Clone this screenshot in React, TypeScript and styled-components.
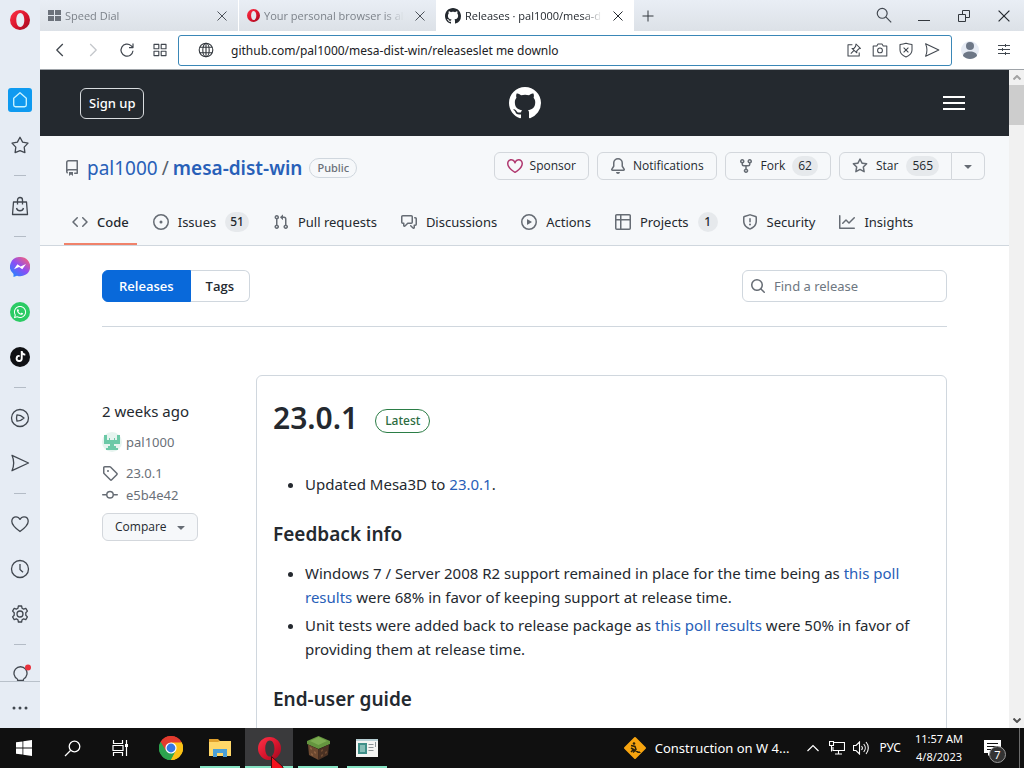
import React from 'react';
import styled, { createGlobalStyle, css } from 'styled-components';
import { FaWhatsapp, FaTiktok } from 'react-icons/fa';

const GlobalStyle = createGlobalStyle`
  * { box-sizing: border-box; }
  html, body { margin: 0; height: 100%; }
  body {
    overflow: hidden;
    font-family: "Noto Sans", "Open Sans", sans-serif;
    font-size: 13px;
    line-height: 20px;
    color: #24292f;
    background: #fff;
  }
  button, input { font: inherit; color: inherit; }
  button { margin: 0; padding: 0; border: 0; background: none; }
  a { color: #2860b8; text-decoration: none; }
  h1, h2, p, ul { margin: 0; padding: 0; }
  svg { display: block; flex: none; }
`;

/* ---------- icons ---------- */

const octicons = {
  repo: 'M2 2.5A2.5 2.5 0 0 1 4.5 0h8.75a.75.75 0 0 1 .75.75v12.5a.75.75 0 0 1-.75.75h-2.5a.75.75 0 0 1 0-1.5h1.75v-2h-8a1 1 0 0 0-.714 1.7.75.75 0 1 1-1.072 1.05A2.495 2.495 0 0 1 2 11.5Zm10.5-1h-8a1 1 0 0 0-1 1v6.708A2.486 2.486 0 0 1 4.5 9h8ZM5 12.25a.25.25 0 0 1 .25-.25h3.5a.25.25 0 0 1 .25.25v3.25a.25.25 0 0 1-.4.2l-1.45-1.087a.249.249 0 0 0-.3 0L5.4 15.7a.25.25 0 0 1-.4-.2Z',
  heart: 'm8 14.25.345.666a.75.75 0 0 1-.69 0l-.008-.004-.018-.01a7.152 7.152 0 0 1-.31-.17 22.055 22.055 0 0 1-3.434-2.414C2.045 10.731 0 8.35 0 5.5 0 2.836 2.086 1 4.25 1 5.797 1 7.153 1.802 8 3.02 8.847 1.802 10.203 1 11.75 1 13.914 1 16 2.836 16 5.5c0 2.85-2.045 5.231-3.885 6.818a22.066 22.066 0 0 1-3.744 2.584l-.018.01-.006.003h-.002ZM4.25 2.5c-1.336 0-2.75 1.164-2.75 3 0 2.15 1.58 4.144 3.365 5.682A20.58 20.58 0 0 0 8 13.393a20.58 20.58 0 0 0 3.135-2.211C12.92 9.644 14.5 7.65 14.5 5.5c0-1.836-1.414-3-2.75-3-1.373 0-2.609.986-3.029 2.456a.749.749 0 0 1-1.442 0C6.859 3.486 5.623 2.5 4.25 2.5Z',
  bell: 'M8 16a2 2 0 0 0 1.985-1.75c.017-.137-.097-.25-.235-.25h-3.5c-.138 0-.252.113-.235.25A2 2 0 0 0 8 16ZM3 5a5 5 0 0 1 10 0v2.947c0 .05.015.098.042.139l1.703 2.555A1.519 1.519 0 0 1 13.482 13H2.518a1.516 1.516 0 0 1-1.263-2.36l1.703-2.554A.255.255 0 0 0 3 7.947Zm5-3.5A3.5 3.5 0 0 0 4.5 5v2.947c0 .346-.102.683-.294.97l-1.703 2.556a.017.017 0 0 0-.003.01l.001.006c0 .002.002.004.004.006l.006.004.007.001h10.964l.007-.001.006-.004.004-.006.001-.007a.017.017 0 0 0-.003-.01l-1.703-2.554a1.745 1.745 0 0 1-.294-.97V5A3.5 3.5 0 0 0 8 1.5Z',
  fork: 'M5 5.372v.878c0 .414.336.75.75.75h4.5a.75.75 0 0 0 .75-.75v-.878a2.25 2.25 0 1 1 1.5 0v.878a2.25 2.25 0 0 1-2.25 2.25h-1.5v2.128a2.251 2.251 0 1 1-1.5 0V8.5h-1.5A2.25 2.25 0 0 1 3.5 6.25v-.878a2.25 2.25 0 1 1 1.5 0ZM5 3.25a.75.75 0 1 0-1.5 0 .75.75 0 0 0 1.5 0Zm6.75.75a.75.75 0 1 0 0-1.5.75.75 0 0 0 0 1.5Zm-3 8.75a.75.75 0 1 0-1.5 0 .75.75 0 0 0 1.5 0Z',
  star: 'M8 .25a.75.75 0 0 1 .673.418l1.882 3.815 4.21.612a.75.75 0 0 1 .416 1.279l-3.046 2.97.719 4.192a.751.751 0 0 1-1.088.791L8 12.347l-3.766 1.98a.75.75 0 0 1-1.088-.79l.72-4.194L.818 6.374a.75.75 0 0 1 .416-1.28l4.21-.611L7.327.668A.75.75 0 0 1 8 .25Zm0 2.445L6.615 5.5a.75.75 0 0 1-.564.41l-3.097.45 2.24 2.184a.75.75 0 0 1 .216.664l-.528 3.084 2.769-1.456a.75.75 0 0 1 .698 0l2.77 1.456-.53-3.084a.75.75 0 0 1 .216-.664l2.24-2.183-3.096-.45a.75.75 0 0 1-.564-.41L8 2.694Z',
  caret: 'm4.427 7.427 3.396 3.396a.25.25 0 0 0 .354 0l3.396-3.396A.25.25 0 0 0 11.396 7H4.604a.25.25 0 0 0-.177.427Z',
  code: 'm11.28 3.22 4.25 4.25a.75.75 0 0 1 0 1.06l-4.25 4.25a.749.749 0 0 1-1.275-.326.749.749 0 0 1 .215-.734L13.94 8l-3.72-3.72a.749.749 0 0 1 .326-1.275.749.749 0 0 1 .734.215Zm-6.56 0a.751.751 0 0 1 1.042.018.751.751 0 0 1 .018 1.042L2.06 8l3.72 3.72a.749.749 0 0 1-.326 1.275.749.749 0 0 1-.734-.215L.47 8.53a.75.75 0 0 1 0-1.06Z',
  issue: 'M8 9.5a1.5 1.5 0 1 0 0-3 1.5 1.5 0 0 0 0 3Z M8 0a8 8 0 1 1 0 16A8 8 0 0 1 8 0ZM1.5 8a6.5 6.5 0 1 0 13 0 6.5 6.5 0 0 0-13 0Z',
  pull: 'M1.5 3.25a2.25 2.25 0 1 1 3 2.122v5.256a2.251 2.251 0 1 1-1.5 0V5.372A2.25 2.25 0 0 1 1.5 3.25Zm5.677-.177L9.573.677A.25.25 0 0 1 10 .854V2.5h1A2.5 2.5 0 0 1 13.5 5v5.628a2.251 2.251 0 1 1-1.5 0V5a1 1 0 0 0-1-1h-1v1.646a.25.25 0 0 1-.427.177L7.177 3.427a.25.25 0 0 1 0-.354ZM3.75 2.5a.75.75 0 1 0 0 1.5.75.75 0 0 0 0-1.5Zm0 9.5a.75.75 0 1 0 0 1.5.75.75 0 0 0 0-1.5Zm8.25.75a.75.75 0 1 0 1.5 0 .75.75 0 0 0-1.5 0Z',
  discussion: 'M1.75 1h8.5c.966 0 1.75.784 1.75 1.75v5.5A1.75 1.75 0 0 1 10.25 10H7.061l-2.574 2.573A1.458 1.458 0 0 1 2 11.543V10h-.25A1.75 1.75 0 0 1 0 8.25v-5.5C0 1.784.784 1 1.75 1ZM1.5 2.75v5.5c0 .138.112.25.25.25h1a.75.75 0 0 1 .75.75v2.19l2.72-2.72a.749.749 0 0 1 .53-.22h3.5a.25.25 0 0 0 .25-.25v-5.5a.25.25 0 0 0-.25-.25h-8.5a.25.25 0 0 0-.25.25Zm13 2a.25.25 0 0 0-.25-.25h-.5a.75.75 0 0 1 0-1.5h.5c.966 0 1.75.784 1.75 1.75v5.5A1.75 1.75 0 0 1 14.25 12H14v1.543a1.458 1.458 0 0 1-2.487 1.03L9.22 12.28a.749.749 0 0 1 .326-1.275.749.749 0 0 1 .734.215l2.22 2.22v-2.19a.75.75 0 0 1 .75-.75h1a.25.25 0 0 0 .25-.25Z',
  play: 'M8 0a8 8 0 1 1 0 16A8 8 0 0 1 8 0ZM1.5 8a6.5 6.5 0 1 0 13 0 6.5 6.5 0 0 0-13 0Zm4.879-2.773 4.264 2.559a.25.25 0 0 1 0 .428l-4.264 2.559A.25.25 0 0 1 6 10.559V5.442a.25.25 0 0 1 .379-.215Z',
  table: 'M0 1.75C0 .784.784 0 1.75 0h12.5C15.216 0 16 .784 16 1.75v12.5A1.75 1.75 0 0 1 14.25 16H1.75A1.75 1.75 0 0 1 0 14.25ZM6.5 6.5v8h7.75a.25.25 0 0 0 .25-.25V6.5Zm8-1.5V1.75a.25.25 0 0 0-.25-.25H6.5V5Zm-13 1.5v7.75c0 .138.112.25.25.25H5v-8ZM5 5V1.5H1.75a.25.25 0 0 0-.25.25V5Z',
  shield: 'M7.467.133a1.748 1.748 0 0 1 1.066 0l5.25 1.68A1.75 1.75 0 0 1 15 3.48V7c0 1.566-.32 3.182-1.303 4.682-.983 1.498-2.585 2.813-5.032 3.855a1.697 1.697 0 0 1-1.33 0c-2.447-1.042-4.049-2.357-5.032-3.855C1.32 10.182 1 8.566 1 7V3.48a1.755 1.755 0 0 1 1.217-1.667Zm.61 1.429a.25.25 0 0 0-.153 0l-5.25 1.68a.25.25 0 0 0-.174.238V7c0 1.358.275 2.666 1.057 3.86.784 1.194 2.121 2.34 4.366 3.297a.196.196 0 0 0 .154 0c2.245-.956 3.582-2.104 4.366-3.298C13.225 9.666 13.5 8.36 13.5 7V3.48a.251.251 0 0 0-.174-.237l-5.25-1.68ZM8.75 4.75v3a.75.75 0 0 1-1.5 0v-3a.75.75 0 0 1 1.5 0ZM9 10.5a1 1 0 1 1-2 0 1 1 0 0 1 2 0Z',
  graph: 'M1.5 1.75V13.5h13.75a.75.75 0 0 1 0 1.5H.75a.75.75 0 0 1-.75-.75V1.75a.75.75 0 0 1 1.5 0Zm14.28 2.53-5.25 5.25a.75.75 0 0 1-1.06 0L7 7.06 4.28 9.78a.751.751 0 0 1-1.042-.018.751.751 0 0 1-.018-1.042l3.25-3.25a.75.75 0 0 1 1.06 0L10 7.94l4.72-4.72a.751.751 0 0 1 1.042.018.751.751 0 0 1 .018 1.042Z',
  search: 'M10.68 11.74a6 6 0 0 1-7.922-8.982 6 6 0 0 1 8.982 7.922l3.04 3.04a.749.749 0 0 1-.326 1.275.749.749 0 0 1-.734-.215ZM11.5 7a4.499 4.499 0 1 0-8.997 0A4.499 4.499 0 0 0 11.5 7Z',
  tag: 'M1 7.775V2.75C1 1.784 1.784 1 2.75 1h5.025c.464 0 .91.184 1.238.513l6.25 6.25a1.75 1.75 0 0 1 0 2.474l-5.026 5.026a1.75 1.75 0 0 1-2.474 0l-6.25-6.25A1.752 1.752 0 0 1 1 7.775Zm1.5 0c0 .066.026.13.073.177l6.25 6.25a.25.25 0 0 0 .354 0l5.025-5.025a.25.25 0 0 0 0-.354l-6.25-6.25a.25.25 0 0 0-.177-.073H2.75a.25.25 0 0 0-.25.25ZM6 5a1 1 0 1 1 0 2 1 1 0 0 1 0-2Z',
  commit: 'M11.93 8.5a4.002 4.002 0 0 1-7.86 0H.75a.75.75 0 0 1 0-1.5h3.32a4.002 4.002 0 0 1 7.86 0h3.32a.75.75 0 0 1 0 1.5Zm-1.43-.75a2.5 2.5 0 1 0-5 0 2.5 2.5 0 0 0 5 0Z',
  github: 'M8 0C3.58 0 0 3.58 0 8c0 3.54 2.29 6.53 5.47 7.59.4.07.55-.17.55-.38 0-.19-.01-.82-.01-1.49-2.01.37-2.53-.49-2.69-.94-.09-.23-.48-.94-.82-1.13-.28-.15-.68-.52-.01-.53.63-.01 1.08.58 1.23.82.72 1.21 1.87.87 2.33.66.07-.52.28-.87.51-1.07-1.78-.2-3.64-.89-3.64-3.95 0-.87.31-1.59.82-2.15-.08-.2-.36-1.02.08-2.12 0 0 .67-.21 2.2.82.64-.18 1.32-.27 2-.27.68 0 1.36.09 2 .27 1.53-1.04 2.2-.82 2.2-.82.44 1.1.16 1.92.08 2.12.51.56.82 1.27.82 2.15 0 3.07-1.87 3.75-3.65 3.95.29.25.54.73.54 1.48 0 1.07-.01 1.93-.01 2.2 0 .21.15.46.55.38A8.013 8.013 0 0016 8c0-4.42-3.58-8-8-8z',
};

type OctName = keyof typeof octicons;

const Oct = ({ name, size = 16, color = '#666c74' }: { name: OctName; size?: number; color?: string }) => (
  <svg width={size} height={size} viewBox="0 0 16 16" fill={color} aria-hidden="true">
    <path d={octicons[name]} />
  </svg>
);

const LineIcon = ({
  size = 20,
  color = '#41474f',
  weight = 1.3,
  children,
}: {
  size?: number;
  color?: string;
  weight?: number;
  children: React.ReactNode;
}) => (
  <svg
    width={size}
    height={size}
    viewBox="0 0 20 20"
    fill="none"
    stroke={color}
    strokeWidth={weight}
    strokeLinejoin="round"
    overflow="visible"
    aria-hidden="true"
  >
    {children}
  </svg>
);

const OperaLogo = ({ size, id }: { size: number; id: string }) => (
  <svg width={size} height={size} viewBox="0 0 20 20" aria-hidden="true">
    <defs>
      <linearGradient id={id} x1="0" y1="0" x2="1" y2="1">
        <stop offset="0" stopColor="#ff3348" />
        <stop offset="0.55" stopColor="#d8142c" />
        <stop offset="1" stopColor="#9c0a20" />
      </linearGradient>
    </defs>
    <path
      fill={`url(#${id})`}
      fillRule="evenodd"
      d="M10 0a10 10 0 1 0 0 20a10 10 0 0 0 0-20ZM10.300 3c2.400 0 4 3 4 7s-1.600 7-4 7s-4-3-4-7s1.600-7 4-7Z"
    />
  </svg>
);

const CloseIcon = ({ size = 10, color = '#4c525a' }: { size?: number; color?: string }) => (
  <svg width={size} height={size} viewBox="0 0 10 10" stroke={color} strokeWidth="1" aria-hidden="true">
    <path d="M0.500 0.500l9 9M9.500 0.500l-9 9" />
  </svg>
);

const GlobeIcon = () => (
  <LineIcon size={16} color="#33383e" weight={1.4}>
    <circle cx="10" cy="10" r="8.500" />
    <ellipse cx="10" cy="10" rx="4" ry="8.500" />
    <path d="M2.500 6.500h15M2.500 13.500h15M10 1.500v17" />
  </LineIcon>
);

const ShieldXIcon = () => (
  <LineIcon size={16} weight={1.3}>
    <path d="M10 1.500c2.500 1 5 1.400 7.500 1.500v7c0 4-3 7-7.500 8.700C5.500 17 2.500 14 2.500 10V3C5 2.900 7.500 2.500 10 1.500ZM7 7l6 6M13 7l-6 6" />
  </LineIcon>
);

const GearIcon = () => (
  <LineIcon>
    <circle cx="10" cy="10" r="3" />
    <path d="M8.400 2h3.200l.5 2.300 1.500.8 2.200-.8 1.600 2.800-1.600 1.600v2.600l1.600 1.600-1.600 2.800-2.200-.8-1.500.8-.5 2.300H8.400l-.5-2.300-1.500-.8-2.200.8-1.600-2.800 1.600-1.600V8.700L2.600 7.100l1.600-2.800 2.200.8 1.500-.8Z" />
  </LineIcon>
);

const MessengerLogo = () => (
  <svg width="20" height="20" viewBox="0 0 20 20" aria-hidden="true">
    <defs>
      <linearGradient id="msgr" x1="0.100" y1="1" x2="0.900" y2="0">
        <stop offset="0" stopColor="#1a8cff" />
        <stop offset="0.500" stopColor="#8b4df5" />
        <stop offset="1" stopColor="#ff6370" />
      </linearGradient>
    </defs>
    <path fill="url(#msgr)" d="M10 0a10 9.600 0 1 1-3 18.700L3.500 20v-3A9.600 9.600 0 0 1 10 0Z" />
    <path fill="#fff" d="M4 12.300l3.400-5 3.200 2.300L16 6.900l-3.700 5.300-3.200-2.300Z" />
  </svg>
);

const SendIcon = ({ size = 20 }: { size?: number }) => (
  <LineIcon size={size}>
    <path d="M2 2.300l16.500 7.700L2 17.700C4.500 12 4.500 8 2 2.300Z" />
  </LineIcon>
);

/* ---------- shell ---------- */

const Desktop = styled.div`
  display: flex;
  flex-direction: column;
  height: 100vh;
  overflow: hidden;
`;

const Browser = styled.div`
  flex: 1;
  min-height: 0;
  display: flex;
`;

const Sidebar = styled.aside`
  width: 40px;
  flex: none;
  display: flex;
  flex-direction: column;
  background: #e6ecf4;
`;

const SideScroll = styled.div`
  flex: 1;
  min-height: 0;
  overflow: hidden;
`;

const SideLogo = styled.button`
  display: flex;
  justify-content: center;
  width: 100%;
  height: 77px;
  padding-top: 10px;
`;

const SideButton = styled.button`
  display: flex;
  align-items: center;
  justify-content: center;
  width: 100%;
  height: 45px;
`;

const SideTile = styled.span<{ $bg: string; $round?: boolean; $size: number }>`
  display: flex;
  align-items: center;
  justify-content: center;
  width: ${(p) => p.$size}px;
  height: ${(p) => p.$size}px;
  border-radius: ${(p) => (p.$round ? '50%' : '3px')};
  background: ${(p) => p.$bg};
`;

const SideRule = styled.hr`
  width: 12px;
  height: 1px;
  margin: 8px auto 7px;
  border: 0;
  background: #b4bcc6;
`;

const SideMore = styled.button`
  display: flex;
  align-items: center;
  justify-content: center;
  height: 47px;
  padding-top: 6px;
  border-top: 1px solid #b9c1ca;
`;

const Window = styled.div`
  flex: 1;
  min-width: 0;
  display: flex;
  flex-direction: column;
`;

const TabStrip = styled.div`
  display: flex;
  height: 31px;
  flex: none;
  background: linear-gradient(#e9eef5, #dce1e7);
`;

const Tab = styled.div<{ $active?: boolean }>`
  display: flex;
  align-items: center;
  gap: 4px;
  flex: 0 1 198px;
  min-width: 0;
  padding: 0 11px 0 8px;
  font-size: 12px;
  color: ${(p) => (p.$active ? '#24292f' : '#7c828a')};
  background: ${(p) => (p.$active ? '#fff' : 'transparent')};
  & + & { border-left: 1px solid ${(p) => (p.$active ? '#fff' : '#c3c8cf')}; }
`;

const TabTitle = styled.span`
  flex: 1;
  min-width: 0;
  overflow: hidden;
  white-space: nowrap;
  margin-right: 7px;
  font-family: "Open Sans", sans-serif;
  font-size: 11px;
  mask-image: linear-gradient(90deg, #000 calc(100% - 20px), transparent);
`;

const StripButton = styled.button<{ $width: number }>`
  width: ${(p) => p.$width}px;
  height: 31px;
  display: flex;
  align-items: center;
  justify-content: center;
`;

const StripSpacer = styled.div`
  flex: 1;
`;

const Toolbar = styled.div`
  display: flex;
  align-items: center;
  flex: none;
  height: 39px;
  padding: 0 4px 0 3px;
  background: #fff;
  border-bottom: 1px solid #9ea3a8;
`;

const ToolButton = styled.button<{ $width: number }>`
  width: ${(p) => p.$width}px;
  height: 32px;
  flex: none;
  display: flex;
  align-items: center;
  justify-content: center;
`;

const AddressBox = styled.div`
  flex: 1;
  min-width: 0;
  height: 31px;
  margin: 0 1px 0 2px;
  padding: 0 6px 0 19px;
  display: flex;
  align-items: center;
  border: 1px solid #3a87b7;
  border-radius: 3px;
  background: #fff;
`;

const AddressInput = styled.input`
  flex: 1;
  min-width: 0;
  height: 28px;
  margin-left: 17px;
  padding: 0;
  border: 0;
  outline: 0;
  background: transparent;
  font-size: 12px;
  color: #202124;
`;

const Viewport = styled.div`
  flex: 1;
  min-height: 0;
  display: flex;
`;

const Page = styled.div`
  flex: 1;
  min-width: 0;
  overflow: hidden;
  background: #fff;
`;

const Scrollbar = styled.div`
  width: 15px;
  flex: none;
  display: flex;
  flex-direction: column;
  align-items: center;
  padding: 5px 0;
  background: #f1f1f1;
`;

const Thumb = styled.div`
  width: 15px;
  height: 40px;
  margin: 5px 0 auto;
  background: #cdcdcd;
`;

/* ---------- web page ---------- */

const SiteHeader = styled.header`
  display: grid;
  grid-template-columns: 1fr auto 1fr;
  align-items: center;
  height: 66px;
  padding: 0 40px;
  background: #24292f;
`;

const SignUp = styled.button`
  justify-self: start;
  height: 31px;
  padding: 0 8px;
  border: 1px solid #d9dcdf;
  border-radius: 6px;
  color: #fff;
  font-size: 13px;
  font-weight: 500;
`;

const MenuButton = styled.button`
  justify-self: end;
  padding: 4px;
`;

const RepoHead = styled.section`
  background: #f6f8fa;
  border-bottom: 1px solid #d0d7de;
  padding: 16px 24px 0;
`;

const TitleRow = styled.div`
  display: flex;
  align-items: flex-start;
  justify-content: space-between;
`;

const RepoTitle = styled.div`
  display: flex;
  align-items: center;
  gap: 7px;
  height: 32px;
`;

const RepoName = styled.h1`
  font-size: 19px;
  line-height: 28px;
  font-weight: 400;
  white-space: nowrap;
  strong { font-weight: 600; }
  span { margin: 0 4px; color: #57606a; }
`;

const Pill = styled.span<{ $green?: boolean }>`
  padding: 0 ${(p) => (p.$green ? 9 : 7)}px;
  margin-top: ${(p) => (p.$green ? 6 : 0)}px;
  border: 1px solid ${(p) => (p.$green ? '#2b7d46' : '#d0d7de')};
  border-radius: 24px;
  font-size: ${(p) => (p.$green ? 12 : 11)}px;
  line-height: ${(p) => (p.$green ? 22 : 18)}px;
  font-weight: 500;
  color: ${(p) => (p.$green ? '#2b6b40' : '#6a7078')};
`;

const Actions = styled.div`
  display: flex;
  gap: 8px;
`;

const smallButton = css`
  display: flex;
  align-items: center;
  height: 28px;
  border: 1px solid #d3d7dc;
  border-radius: 6px;
  background: #f6f8fa;
  font-family: "Open Sans", sans-serif;
  font-size: 12px;
  line-height: 18px;
  font-weight: 500;
  white-space: nowrap;
`;

const Counter = styled.span`
  min-width: 20px;
  padding: 0 5px;
  border-radius: 20px;
  background: #e6e9ec;
  text-align: center;
  font-size: 12px;
  line-height: 20px;
  font-weight: 500;
`;

const ActionButton = styled.button<{ $split?: 'left' | 'right' }>`
  ${smallButton}
  gap: ${(p) => (p.$split === 'left' ? 8 : 7)}px;
  padding: 0 12px;
  ${Counter} { padding: 0 6px; }
  ${(p) => p.$split === 'left' && 'border-radius: 6px 0 0 6px;'}
  ${(p) => p.$split === 'right' && 'border-radius: 0 6px 6px 0; border-left: 0; padding: 0 8px;'}
`;

const SplitButton = styled.div`
  display: flex;
`;

const RepoNav = styled.nav`
  display: flex;
  gap: 8px;
  margin-top: 14px;
`;

const NavItem = styled.a<{ $current?: boolean }>`
  display: flex;
  align-items: center;
  gap: 9px;
  height: 47px;
  padding: 3px 8px 0;
  white-space: nowrap;
  color: #24292f;
  border-bottom: 2px solid ${(p) => (p.$current ? '#f0826a' : 'transparent')};
  font-weight: ${(p) => (p.$current ? 500 : 400)};
`;

const Content = styled.main`
  padding: 24px 62px 0;
`;

const Subnav = styled.div`
  display: flex;
  justify-content: space-between;
  padding-bottom: 24px;
  border-bottom: 1px solid #d0d7de;
`;

const Segments = styled.div`
  display: flex;
  height: 32px;
  font-family: "Open Sans", sans-serif;
`;

const Segment = styled.a<{ $selected?: boolean }>`
  display: flex;
  align-items: center;
  padding: 0 ${(p) => (p.$selected ? 16 : 15)}px;
  font-weight: 600;
  border: 1px solid ${(p) => (p.$selected ? '#0969da' : '#d0d7de')};
  border-left-width: ${(p) => (p.$selected ? 1 : 0)}px;
  border-radius: ${(p) => (p.$selected ? '6px 0 0 6px' : '0 6px 6px 0')};
  background: ${(p) => (p.$selected ? '#0969da' : '#fff')};
  color: ${(p) => (p.$selected ? '#fff' : '#24292f')};
`;

const SearchBox = styled.label`
  display: flex;
  align-items: center;
  gap: 8px;
  width: 205px;
  height: 32px;
  padding: 0 7px;
  border: 1px solid #d0d7de;
  border-radius: 6px;
  input {
    flex: 1;
    min-width: 0;
    padding: 0;
    border: 0;
    outline: 0;
    background: transparent;
  }
  input::placeholder { color: #6e7781; opacity: 1; }
`;

const ReleaseRow = styled.section`
  display: grid;
  grid-template-columns: 138px 1fr;
  gap: 16px;
  margin-top: 48px;
`;

const Meta = styled.div`
  padding-top: 24px;
`;

const When = styled.p`
  font-size: 15px;
  line-height: 24px;
  margin-bottom: 8px;
`;

const MetaLine = styled.a<{ $gap: number }>`
  display: flex;
  align-items: center;
  gap: 8px;
  line-height: 22px;
  margin-bottom: ${(p) => p.$gap}px;
  color: #6a7078;
`;

const AuthorLine = styled(MetaLine)`
  gap: 4px;
`;

const Compare = styled.button`
  ${smallButton}
  gap: 6px;
  margin-top: 7px;
  padding: 0 8px 0 12px;
`;

const Card = styled.article`
  min-width: 0;
  height: 460px;
  padding: 22px 16px 0;
  border: 1px solid #d0d7de;
  border-radius: 6px;
`;

const CardHead = styled.div`
  display: flex;
  align-items: center;
  gap: 17px;
  height: 40px;
  margin-bottom: 34px;
`;

const Version = styled.h1`
  font-size: 30px;
  line-height: 40px;
  font-weight: 600;
`;

const Heading = styled.h2`
  font-size: 19px;
  line-height: 26px;
  font-weight: 600;
  margin: 25px 0 14px;
`;

const Notes = styled.ul`
  padding-left: 32px;
  font-size: 15px;
  line-height: 24px;
  li + li { margin-top: 4px; }
`;

/* ---------- taskbar ---------- */

const Taskbar = styled.footer`
  display: flex;
  flex: none;
  height: 40px;
  background: #101010;
  color: #fff;
`;

const TaskButton = styled.button<{ $open?: boolean; $active?: boolean; $first?: boolean }>`
  position: relative;
  display: flex;
  align-items: center;
  justify-content: center;
  width: 48px;
  height: 40px;
  margin-right: ${(p) => (p.$first ? 0 : 1)}px;
  background: ${(p) => (p.$active ? '#3a3a3c' : 'transparent')};
  ${(p) =>
    p.$open &&
    css`
      &::after {
        content: '';
        position: absolute;
        bottom: 0;
        left: ${p.$active ? 0 : 4}px;
        right: ${p.$active ? 0 : 4}px;
        height: 2px;
        background: #86e3c3;
      }
    `}
`;

const SystemGroup = styled.div`
  display: flex;
  margin-right: 3px;
`;

const Pointer = styled.svg`
  position: absolute;
  z-index: 1;
  left: 26px;
  top: 28px;
`;

const Tray = styled.div`
  display: flex;
  align-items: center;
  margin-left: auto;
`;

const NewsButton = styled.button`
  display: flex;
  align-items: center;
  gap: 8px;
  margin-right: 12px;
  white-space: nowrap;
`;

const TrayButton = styled.button`
  display: flex;
  align-items: center;
  justify-content: center;
  width: 24px;
  height: 40px;
`;

const Language = styled.button`
  margin: 0 14px 0 6px;
  font-size: 12px;
`;

const Clock = styled.div`
  font-size: 11px;
  line-height: 18px;
  text-align: center;
`;

const Notices = styled.button`
  position: relative;
  width: 54px;
  height: 40px;
  margin-left: 2px;
  display: flex;
  align-items: center;
  justify-content: center;
`;

const NoticeCount = styled.span`
  position: absolute;
  right: 13px;
  bottom: 5px;
  width: 17px;
  height: 17px;
  border: 1px solid #9a9a9a;
  border-radius: 50%;
  background: #333;
  font-size: 11px;
  line-height: 15px;
  text-align: center;
`;

const PeekEdge = styled.div`
  width: 5px;
  height: 40px;
  border-left: 1px solid #6c6c6c;
`;

/* ---------- sections ---------- */

const SideNav = () => (
  <Sidebar>
    <SideScroll>
      <SideLogo aria-label="Opera menu"><OperaLogo size={20} id="opera-side" /></SideLogo>
      <SideButton aria-label="Home">
        <SideTile $bg="#0f9af0" $size={24}>
          <LineIcon size={18} color="#c8f3ff" weight={1.5}>
            <path d="M10 2l7 6v7.500a2 2 0 0 1-2 2H5a2 2 0 0 1-2-2V8Z" />
          </LineIcon>
        </SideTile>
      </SideButton>
      <SideButton aria-label="Bookmarks">
        <LineIcon>
          <path d="M10 2.200l2.600 4.900 5.400 1-3.800 4 .7 5.500L10 15.600l-4.900 2 .7-5.500L2 8.100l5.400-1Z" />
        </LineIcon>
      </SideButton>
      <SideRule />
      <SideButton aria-label="Shopping">
        <LineIcon>
          <path d="M3.500 6h13l1 12.500h-15ZM7.500 8.500V4a2.500 2.500 0 0 1 5 0v4.500M6.500 12a3.600 3.600 0 0 0 7 0" />
        </LineIcon>
      </SideButton>
      <SideRule />
      <SideButton aria-label="Messenger"><MessengerLogo /></SideButton>
      <SideButton aria-label="WhatsApp">
        <SideTile $bg="#2bcb64" $round $size={20}><FaWhatsapp size={14} color="#fff" /></SideTile>
      </SideButton>
      <SideButton aria-label="TikTok">
        <SideTile $bg="#101114" $round $size={20}><FaTiktok size={11} color="#fff" /></SideTile>
      </SideButton>
      <SideRule />
      <SideButton aria-label="Player">
        <LineIcon>
          <circle cx="10" cy="10" r="8.500" />
          <path d="M7 6.800c2.500 0 5 1.200 7 3.200-2 2-4.500 3.200-7 3.200-.6-2-.6-4.400 0-6.400Z" />
        </LineIcon>
      </SideButton>
      <SideButton aria-label="My Flow"><SendIcon /></SideButton>
      <SideRule />
      <SideButton aria-label="Pinboards">
        <LineIcon>
          <path d="M10 17.500C5 14 1.800 11 1.800 7.300 1.800 4.500 3.700 2.800 6 2.800c1.800 0 3.200 1 4 2.600.8-1.600 2.200-2.600 4-2.600 2.300 0 4.200 1.700 4.200 4.500 0 3.700-3.200 6.700-8.200 10.200Z" />
        </LineIcon>
      </SideButton>
      <SideButton aria-label="History">
        <LineIcon>
          <circle cx="10" cy="10" r="8.500" />
          <path d="M10 5v5.500l3 2.800" />
        </LineIcon>
      </SideButton>
      <SideButton aria-label="Settings"><GearIcon /></SideButton>
      <SideRule />
      <SideButton aria-label="Tips">
        <LineIcon>
          <path d="M7.500 14a6.500 6.500 0 1 1 6 0M7.500 14v1.300h6V14M7.500 17h6" />
          <circle cx="18" cy="2.500" r="3" fill="#e8323c" stroke="none" />
        </LineIcon>
      </SideButton>
    </SideScroll>
    <SideMore aria-label="More">
      <svg width="16" height="4" viewBox="0 0 16 4" fill="#41474f" aria-hidden="true">
        <circle cx="2" cy="2" r="1.500" /><circle cx="8" cy="2" r="1.500" /><circle cx="14" cy="2" r="1.500" />
      </svg>
    </SideMore>
  </Sidebar>
);

const Tabs = () => (
  <TabStrip>
    <Tab>
      <svg width="13" height="12" viewBox="0 0 13 12" fill="#6c727b" aria-hidden="true">
        <path d="M0 0h6v5H0ZM7 0h6v5H7ZM0 6h6v5H0ZM7 6h6v5H7Z" />
      </svg>
      <TabTitle>Speed Dial</TabTitle>
      <button aria-label="Close tab"><CloseIcon /></button>
    </Tab>
    <Tab>
      <OperaLogo size={13} id="opera-tab" />
      <TabTitle>Your personal browser is al</TabTitle>
      <button aria-label="Close tab"><CloseIcon /></button>
    </Tab>
    <Tab $active>
      <Oct name="github" color="#24292f" />
      <TabTitle>Releases · pal1000/mesa-d</TabTitle>
      <button aria-label="Close tab"><CloseIcon color="#24292f" /></button>
    </Tab>
    <StripButton $width={28} aria-label="New tab">
      <svg width="12" height="12" viewBox="0 0 12 12" stroke="#33383e" aria-hidden="true"><path d="M6 0.500v11M0.500 6h11" /></svg>
    </StripButton>
    <StripSpacer />
    <StripButton $width={40} aria-label="Search tabs">
      <LineIcon size={18}><circle cx="8" cy="7" r="5.500" /><path d="M12 11l6 6" /></LineIcon>
    </StripButton>
    <StripButton $width={40} aria-label="Minimize">
      <svg width="12" height="12" viewBox="0 0 12 12" stroke="#33383e" aria-hidden="true"><path d="M0 10.500h12" /></svg>
    </StripButton>
    <StripButton $width={40} aria-label="Restore">
      <svg width="12" height="12" viewBox="0 0 12 12" fill="none" stroke="#33383e" aria-hidden="true">
        <path d="M0.500 4.500h7v7h-7ZM4.500 4.500v-4h7v7h-4" />
      </svg>
    </StripButton>
    <StripButton $width={40} aria-label="Close"><CloseIcon size={12} color="#24292f" /></StripButton>
  </TabStrip>
);

const AddressBar = () => (
  <Toolbar>
    <ToolButton $width={33} aria-label="Back">
      <LineIcon size={16} weight={1.6}><path d="M13.500 2.500L6 10l7.500 7.500" /></LineIcon>
    </ToolButton>
    <ToolButton $width={34} aria-label="Forward">
      <LineIcon size={16} weight={1.6} color="#c4c7cb"><path d="M6.500 2.500L14 10l-7.500 7.500" /></LineIcon>
    </ToolButton>
    <ToolButton $width={33} aria-label="Reload">
      <LineIcon size={16} weight={1.5}><path d="M17.500 11a7.500 7.500 0 1 1-2.500-6.500l2 2M17.500 2v5h-5" /></LineIcon>
    </ToolButton>
    <ToolButton $width={33} aria-label="Start page">
      <LineIcon size={16} weight={1.4}>
        <path d="M2.500 3h6v5.500h-6ZM11.500 3h6v5.500h-6ZM2.500 11.500h6V17h-6ZM11.500 11.500h6V17h-6Z" />
      </LineIcon>
    </ToolButton>
    <AddressBox>
      <GlobeIcon />
      <AddressInput aria-label="Address" defaultValue="github.com/pal1000/mesa-dist-win/releaseslet me downlo" />
      <ToolButton $width={26} aria-label="Pin page">
        <LineIcon size={16} weight={1.3}>
          <path d="M8 3.500H2.500v14h14V13M12.500 2.500l5.500 5.500-2 .5-2.500 2.500v2.500L7.500 8H10l2-2.500ZM10 10.500L6 14.500" />
        </LineIcon>
      </ToolButton>
      <ToolButton $width={26} aria-label="Snapshot">
        <LineIcon size={16} weight={1.3}>
          <path d="M1.500 5H6l1.500-2.500h5L14 5h4.500v12.500h-17Z" /><circle cx="10" cy="10.500" r="3" />
        </LineIcon>
      </ToolButton>
      <ToolButton $width={26} aria-label="Ad blocker"><ShieldXIcon /></ToolButton>
      <ToolButton $width={26} aria-label="Send to Flow"><SendIcon size={16} /></ToolButton>
    </AddressBox>
    <ToolButton $width={34} aria-label="Profile">
      <svg width="18" height="18" viewBox="0 0 18 18" aria-hidden="true">
        <circle cx="9" cy="9" r="9" fill="#e6ebf4" />
        <circle cx="9" cy="5" r="4" fill="#6d7786" />
        <path d="M2 15c0-3 3-4.500 7-4.500s7 1.500 7 4.500c-2 2-4.500 3-7 3s-5-1-7-3Z" fill="#6d7786" />
      </svg>
    </ToolButton>
    <ToolButton $width={33} aria-label="Easy setup">
      <svg width="12" height="12" viewBox="0 0 12 12" stroke="#41474f" aria-hidden="true">
        <path d="M0 1.500h12M0 5.500h12M0 9.500h12M7.500 0v3M4.500 4v3M7.500 8v3" />
      </svg>
    </ToolButton>
  </Toolbar>
);

const navItems: { label: string; icon: OctName; count?: number }[] = [
  { label: 'Code', icon: 'code' },
  { label: 'Issues', icon: 'issue', count: 51 },
  { label: 'Pull requests', icon: 'pull' },
  { label: 'Discussions', icon: 'discussion' },
  { label: 'Actions', icon: 'play' },
  { label: 'Projects', icon: 'table', count: 1 },
  { label: 'Security', icon: 'shield' },
  { label: 'Insights', icon: 'graph' },
];

const RepositoryHeader = () => (
  <RepoHead>
    <TitleRow>
      <RepoTitle>
        <Oct name="repo" />
        <RepoName>
          <a href="#owner">pal1000</a>
          <span>/</span>
          <strong><a href="#repo">mesa-dist-win</a></strong>
        </RepoName>
        <Pill>Public</Pill>
      </RepoTitle>
      <Actions>
        <ActionButton><Oct name="heart" color="#b0386f" />Sponsor</ActionButton>
        <ActionButton><Oct name="bell" />Notifications</ActionButton>
        <ActionButton><Oct name="fork" />Fork<Counter>62</Counter></ActionButton>
        <SplitButton>
          <ActionButton $split="left"><Oct name="star" />Star<Counter>565</Counter></ActionButton>
          <ActionButton $split="right" aria-label="Add to a list"><Oct name="caret" /></ActionButton>
        </SplitButton>
      </Actions>
    </TitleRow>
    <RepoNav>
      {navItems.map((item) => (
        <NavItem key={item.label} href={`#${item.icon}`} $current={item.icon === 'code'}>
          <Oct name={item.icon} />
          {item.label}
          {item.count !== undefined && <Counter>{item.count}</Counter>}
        </NavItem>
      ))}
    </RepoNav>
  </RepoHead>
);

const Release = () => (
  <ReleaseRow>
    <Meta>
      <When>2 weeks ago</When>
      <AuthorLine href="#author" $gap={9}>
        <svg width="20" height="20" viewBox="0 0 20 20" aria-hidden="true">
          <circle cx="10" cy="10" r="10" fill="#e6f4ef" />
          <path fill="#6cc9a7" d="M2 3h3v5h2V6h1v2h4V6h1v2h2V3h3v9h-6v2h2v2h2v2H4v-2h2v-2h2v-2H2Z" />
        </svg>
        pal1000
      </AuthorLine>
      <MetaLine href="#tag" $gap={0}><Oct name="tag" />23.0.1</MetaLine>
      <MetaLine href="#commit" $gap={0}><Oct name="commit" />e5b4e42</MetaLine>
      <Compare>Compare<Oct name="caret" /></Compare>
    </Meta>
    <Card>
      <CardHead>
        <Version>23.0.1</Version>
        <Pill $green>Latest</Pill>
      </CardHead>
      <Notes>
        <li>Updated Mesa3D to <a href="#mesa">23.0.1</a>.</li>
      </Notes>
      <Heading>Feedback info</Heading>
      <Notes>
        <li>
          Windows 7 / Server 2008 R2 support remained in place for the time being as{' '}
          <a href="#poll-windows">this poll results</a> were 68% in favor of keeping support at release time.
        </li>
        <li>
          Unit tests were added back to release package as <a href="#poll-tests">this poll results</a> were 50% in
          favor of providing them at release time.
        </li>
      </Notes>
      <Heading>End-user guide</Heading>
    </Card>
  </ReleaseRow>
);

const WindowsTaskbar = () => (
  <Taskbar>
    <SystemGroup>
      <TaskButton $first aria-label="Start">
        <svg width="16" height="16" viewBox="0 0 16 16" fill="#fff" aria-hidden="true">
          <path d="M0 2.300l6.500-.9v6.200H0ZM7.300 1.300L16 0v7.600H7.300ZM0 8.400h6.500v6.200L0 13.700ZM7.300 8.400H16V16l-8.700-1.300Z" />
        </svg>
      </TaskButton>
      <TaskButton $first aria-label="Search">
        <svg width="17" height="17" viewBox="0 0 17 17" fill="none" stroke="#fff" strokeWidth="1.300" aria-hidden="true">
          <circle cx="10.500" cy="6.500" r="5.300" /><path d="M6.500 10.500L1 16" />
        </svg>
      </TaskButton>
      <TaskButton $first aria-label="Task view">
        <svg width="17" height="16" viewBox="0 0 17 16" fill="none" stroke="#fff" strokeWidth="1.200" aria-hidden="true">
          <path d="M1.500 0v3.500h9V0M1 5.500h10v5H1ZM1.500 16v-3.500h9V16M14.500 0v16" />
          <path d="M13 4h3v3h-3Z" fill="#fff" stroke="none" />
        </svg>
      </TaskButton>
    </SystemGroup>
    <TaskButton aria-label="Chrome">
      <svg width="24" height="24" viewBox="0 0 24 24" aria-hidden="true">
        <path fill="#e33b2e" d="M12 12L1.600 6A12 12 0 0 1 22.400 6Z" />
        <path fill="#fbc116" d="M12 12L22.400 6A12 12 0 0 1 12 24Z" />
        <path fill="#2da44e" d="M12 12v12A12 12 0 0 1 1.600 6Z" />
        <path fill="#e33b2e" d="M12 6.500h10.600L22.400 6A12 12 0 0 0 1.600 6L7 15Z" />
        <path fill="#2da44e" d="M1.600 6l5.600 9.500L12 17.500l4.500-2L12 24A12 12 0 0 1 1.600 6Z" />
        <path fill="#fbc116" d="M12 6.500h10.700A12 12 0 0 1 12 24l4.800-9Z" />
        <circle cx="12" cy="12" r="5.600" fill="#fff" />
        <circle cx="12" cy="12" r="4.400" fill="#3478e5" />
      </svg>
    </TaskButton>
    <TaskButton $open aria-label="File Explorer">
      <svg width="22" height="20" viewBox="0 0 22 20" aria-hidden="true">
        <path fill="#e0a02c" d="M0 1h9l2 2h10v4H0Z" />
        <path fill="#ffd768" d="M0 4h9l2-1h11v15H0Z" />
        <path fill="#4a9fd6" d="M4 11h14v8h-4v-4H8v4H4Z" />
      </svg>
    </TaskButton>
    <TaskButton $open $active aria-label="Opera">
      <OperaLogo size={23} id="opera-task" />
      <Pointer width="14" height="16" viewBox="0 0 14 16" aria-hidden="true">
        <path d="M0.500 0.500v15.500h11L12 11Z" fill="#f3121d" stroke="#3b1012" />
      </Pointer>
    </TaskButton>
    <TaskButton $open aria-label="Minecraft">
      <svg width="23" height="24" viewBox="0 0 23 24" aria-hidden="true">
        <path fill="#65953f" d="M11.500 0L23 5v3l-11.500 5L0 8V5Z" />
        <path fill="#7dad52" d="M11.500 1L20 5l-8.500 4L3 5Z" />
        <path fill="#6d4930" d="M1 8.500l10.500 4.700V24L2 19Z" />
        <path fill="#4a3123" d="M22 8.500l-10.500 4.700V24L21 19Z" />
        <path fill="#8d6040" d="M3 11l2 1v2l-2-1ZM7 15l2 1v2l-2-1ZM4 17l2 1v2l-2-1Z" />
        <path fill="#6e4a31" d="M14 14l2-1v2l-2 1ZM18 16l2-1v2l-2 1ZM14 19l2-1v2l-2 1Z" />
      </svg>
    </TaskButton>
    <TaskButton $open aria-label="Viewer">
      <svg width="22" height="18" viewBox="0 0 22 18" aria-hidden="true">
        <path fill="#f4f4f2" d="M0 0h22v18H0Z" />
        <path fill="#b7cfd4" d="M0 0h22v2H0Z" />
        <path fill="#3f8f88" d="M2 4h9v11H2Z" />
        <path fill="#86bdb6" d="M4 6h5v7H4Z" />
        <path stroke="#8d9396" d="M12.500 5.500h5M12.500 8.500h5M12.500 11.500h5M19.500 3v5" />
      </svg>
    </TaskButton>
    <Tray>
      <NewsButton>
        <svg width="24" height="24" viewBox="0 0 24 24" aria-hidden="true">
          <path fill="#f7a40f" stroke="#f7a40f" strokeWidth="2" strokeLinejoin="round" d="M12 2l10 10-10 10L2 12Z" />
          <circle cx="11" cy="7.500" r="1.300" fill="#2c2208" />
          <path fill="none" stroke="#2c2208" strokeWidth="1.500" d="M8 9.500l4 1 1 3-3 3M11 13l-3 3M8 12l7 4" />
          <path fill="#2c2208" d="M14 17l2-2 2 2Z" />
        </svg>
        Construction on W 4...
      </NewsButton>
      <TrayButton aria-label="Show hidden icons">
        <svg width="12" height="8" viewBox="0 0 12 8" fill="none" stroke="#fff" strokeWidth="1.200" aria-hidden="true"><path d="M0.500 7L6 1.500 11.500 7" /></svg>
      </TrayButton>
      <TrayButton aria-label="Network">
        <svg width="16" height="14" viewBox="0 0 16 14" fill="none" stroke="#fff" strokeWidth="1.100" aria-hidden="true">
          <path d="M5 1.500h10.500v8H4V6M0.500 0.500h4v4h-4ZM2.500 4.500v6M9.500 9.500v3.500M6 13h7" />
        </svg>
      </TrayButton>
      <TrayButton aria-label="Volume">
        <svg width="17" height="14" viewBox="0 0 17 14" fill="none" stroke="#fff" strokeWidth="1.100" aria-hidden="true">
          <path d="M0.500 4.500H3L6.500 1v12L3 9.500H0.500ZM8.500 5a3 3 0 0 1 0 4M10.700 3a6 6 0 0 1 0 8M13 1a9 9 0 0 1 0 12" />
        </svg>
      </TrayButton>
      <Language>РУС</Language>
      <Clock>11:57 AM<br />4/8/2023</Clock>
      <Notices aria-label="Notifications, 7 new">
        <svg width="17" height="16" viewBox="0 0 17 16" aria-hidden="true">
          <path fill="#fff" d="M0 0h17v13H7l-3 3v-3H0Z" />
          <path stroke="#101010" d="M3 3.500h11M3 6.500h11M3 9.500h8" />
        </svg>
        <NoticeCount>7</NoticeCount>
      </Notices>
      <PeekEdge />
    </Tray>
  </Taskbar>
);

export default function App() {
  return (
    <Desktop>
      <GlobalStyle />
      <Browser>
        <SideNav />
        <Window>
          <Tabs />
          <AddressBar />
          <Viewport>
            <Page>
              <SiteHeader>
                <SignUp>Sign up</SignUp>
                <Oct name="github" size={32} color="#fff" />
                <MenuButton aria-label="Menu">
                  <svg width="22" height="14" viewBox="0 0 22 14" stroke="#fff" strokeWidth="2" aria-hidden="true">
                    <path d="M0 1h22M0 7h22M0 13h22" />
                  </svg>
                </MenuButton>
              </SiteHeader>
              <RepositoryHeader />
              <Content>
                <Subnav>
                  <Segments>
                    <Segment $selected href="#releases">Releases</Segment>
                    <Segment href="#tags">Tags</Segment>
                  </Segments>
                  <SearchBox>
                    <Oct name="search" />
                    <input type="text" placeholder="Find a release" aria-label="Find a release" />
                  </SearchBox>
                </Subnav>
                <Release />
              </Content>
            </Page>
            <Scrollbar>
              <svg width="8" height="5" viewBox="0 0 8 5" fill="none" stroke="#a3a3a3" strokeWidth="2" aria-hidden="true"><path d="M0.500 4.500L4 1l3.500 3.500" /></svg>
              <Thumb />
              <svg width="8" height="5" viewBox="0 0 8 5" fill="none" stroke="#505050" strokeWidth="2" aria-hidden="true"><path d="M0.500 0.500L4 4l3.500-3.500" /></svg>
            </Scrollbar>
          </Viewport>
        </Window>
      </Browser>
      <WindowsTaskbar />
    </Desktop>
  );
}
